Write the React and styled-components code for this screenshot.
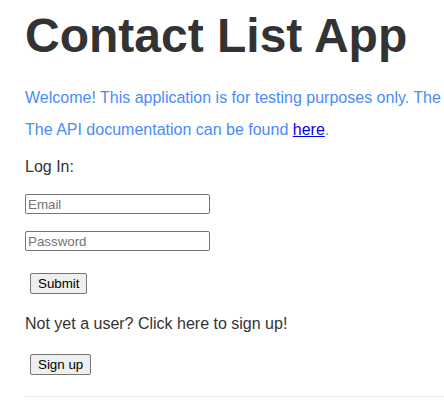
import React from 'react';
import styled, { createGlobalStyle } from 'styled-components';

const Global = createGlobalStyle`
  html, body {
    margin: 0;
    padding: 0;
    background: #fff;
    overflow: hidden;
  }
  body {
    font-family: "Liberation Sans", Arial, sans-serif;
    color: #333;
  }
`;

const Page = styled.div`
  padding: 0 0 0 25px;
  width: 900px;
`;

const Title = styled.h1`
  font-size: 48px;
  font-weight: bold;
  color: #333;
  margin: 4px 0 0;
  line-height: 64px;
`;

const Intro = styled.p`
  color: #4a8cf7;
  font-size: 16px;
  margin: 0;
  line-height: 32px;
  white-space: nowrap;
  &:first-of-type {
    margin-top: 14px;
  }
`;

const DocLink = styled.a`
  color: #0000ee;
  text-decoration: underline;
`;

const Label = styled.p`
  font-size: 16px;
  margin: ${p => p.$top}px 0 0;
  line-height: 18px;
`;

const Form = styled.form`
  display: flex;
  flex-direction: column;
  align-items: flex-start;
  gap: 17px;
  margin-top: 18px;
`;

const Field = styled.input`
  width: 185px;
  height: 20px;
  box-sizing: border-box;
  border: 1px solid #767676;
  border-radius: 2px;
  padding: 1px 2px;
  font-family: "Liberation Sans", Arial, sans-serif;
  font-size: 13.333px;
  &::placeholder {
    color: #757575;
  }
`;

const Button = styled.button`
  margin: ${p => p.$top}px 0 0 5px;
  height: 21px;
  padding: 1px 7px;
  box-sizing: border-box;
  font-family: "Liberation Sans", Arial, sans-serif;
  font-size: 13.333px;
  color: #000;
  background: #efefef;
  border: 1px solid #767676;
  border-radius: 2px;
`;

const Rule = styled.hr`
  margin: 21px 0 0;
  border: none;
  border-top: 1px solid #e8e8e8;
`;

export default function App() {
  return (
    <>
      <Global />
      <Page>
        <Title>Contact List App</Title>
        <Intro>Welcome! This application is for testing purposes only. The database will be purged as needed to keep costs down.</Intro>
        <Intro>
          The API documentation can be found <DocLink href="#">here</DocLink>.
        </Intro>
        <Label $top={12}>Log In:</Label>
        <Form onSubmit={e => e.preventDefault()}>
          <Field type="text" placeholder="Email" />
          <Field type="password" placeholder="Password" />
          <Button type="submit" $top={5}>Submit</Button>
        </Form>
        <Label $top={21}>Not yet a user? Click here to sign up!</Label>
        <Button $top={21}>Sign up</Button>
        <Rule />
      </Page>
    </>
  );
}
